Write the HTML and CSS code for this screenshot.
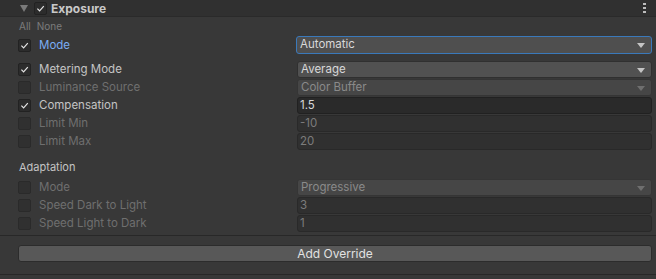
FILE: index.html
```html
<!DOCTYPE html>
<html>
	<head>
		<meta charset="UTF-8">
		<title>Exposure override</title>
		<link rel="stylesheet" href="styles.css">
	</head>
	<body>
		<div class="inspector">
			<div class="header">
				<span class="fold"></span>
				<span class="check on"><svg viewBox="0 0 12 12"><polyline points="2.6,6.2 5,8.6 9.6,3.4"/></svg></span>
				<span class="title">Exposure</span>
				<span class="kebab"><i></i><i></i><i></i></span>
			</div>
			<div class="allnone"><span>All</span><span>None</span></div>

			<div class="row first">
				<span class="check on"><svg viewBox="0 0 12 12"><polyline points="2.6,6.2 5,8.6 9.6,3.4"/></svg></span>
				<span class="label active">Mode</span>
				<div class="field popup focus">Automatic<span class="arrow"></span></div>
			</div>

			<div class="group">
				<div class="row">
					<span class="check on"><svg viewBox="0 0 12 12"><polyline points="2.6,6.2 5,8.6 9.6,3.4"/></svg></span>
					<span class="label">Metering Mode</span>
					<div class="field popup">Average<span class="arrow"></span></div>
				</div>
				<div class="row off">
					<span class="check"></span>
					<span class="label">Luminance Source</span>
					<div class="field popup">Color Buffer<span class="arrow"></span></div>
				</div>
				<div class="row">
					<span class="check on"><svg viewBox="0 0 12 12"><polyline points="2.6,6.2 5,8.6 9.6,3.4"/></svg></span>
					<span class="label">Compensation</span>
					<div class="field text">1.5</div>
				</div>
				<div class="row off">
					<span class="check"></span>
					<span class="label">Limit Min</span>
					<div class="field text">-10</div>
				</div>
				<div class="row off">
					<span class="check"></span>
					<span class="label">Limit Max</span>
					<div class="field text">20</div>
				</div>
			</div>

			<div class="section">Adaptation</div>

			<div class="group">
				<div class="row off">
					<span class="check"></span>
					<span class="label">Mode</span>
					<div class="field popup">Progressive<span class="arrow"></span></div>
				</div>
				<div class="row off">
					<span class="check"></span>
					<span class="label">Speed Dark to Light</span>
					<div class="field text">3</div>
				</div>
				<div class="row off">
					<span class="check"></span>
					<span class="label">Speed Light to Dark</span>
					<div class="field text">1</div>
				</div>
			</div>

			<div class="footer">
				<button class="add">Add Override</button>
			</div>
		</div>
	</body>
</html>
```
FILE: styles.css
```css
*{
	margin: 0;
	padding: 0;
	box-sizing: border-box;
}
body{
	width: 656px;
	height: 279px;
	overflow: hidden;
	background: #383838;
	font-family: Inter, "Noto Sans", sans-serif;
	font-size: 11.5px;
	color: #c4c4c4;
}
.header{
	display: flex;
	align-items: center;
	height: 17px;
	background: #303030;
	border-bottom: 1px solid #2a2a2a;
	padding-left: 20px;
	padding-right: 10px;
}
.fold{
	width: 0;
	height: 0;
	border-left: 4px solid transparent;
	border-right: 4px solid transparent;
	border-top: 7px solid #7a7a7a;
	margin-right: 6px;
}
.header .check{
	margin-right: 4px;
}
.title{
	font-weight: bold;
	font-size: 12px;
	color: #c8c8c8;
	flex: 1;
}
.kebab{
	display: flex;
	flex-direction: column;
	gap: 2px;
}
.kebab i{
	display: block;
	width: 3px;
	height: 2px;
	background: #bdbdbd;
}
.allnone{
	display: flex;
	gap: 6px;
	height: 18px;
	align-items: center;
	padding-left: 19px;
	font-size: 10px;
	color: #7c7c7c;
}
.check{
	display: flex;
	width: 13px;
	height: 13px;
	border-radius: 2px;
	background: #2c2c2c;
	border: 1px solid #222;
	flex: none;
}
.check svg{
	width: 11px;
	height: 11px;
	fill: none;
	stroke: #e4e4e4;
	stroke-width: 1.3;
}
.row{
	display: flex;
	align-items: center;
	height: 18px;
	padding-left: 18px;
	padding-right: 4px;
}
.row .check{
	margin-right: 8px;
}
.row.first{
	height: 18px;
	margin-top: 1px;
	margin-bottom: 6px;
}
.label{
	width: 258px;
	flex: none;
	color: #c4c4c4;
}
.label.active{
	color: #7badf5;
}
.field{
	position: relative;
	flex: 1;
	height: 17px;
	line-height: 15px;
	border-radius: 3px;
	padding-left: 3px;
	white-space: nowrap;
}
.popup{
	background: #515151;
	border: 1px solid #303030;
	color: #d8d8d8;
}
.popup.focus{
	height: 18px;
	border-color: #3a79bb;
	background: #4f4f4f;
	margin-left: -1px;
}
.text{
	background: #2a2a2a;
	border: 1px solid #212121;
	color: #d8d8d8;
	padding-left: 2px;
}
.arrow{
	position: absolute;
	right: 6px;
	top: 6px;
	width: 0;
	height: 0;
	border-left: 4px solid transparent;
	border-right: 4px solid transparent;
	border-top: 5px solid #c4c4c4;
}
.off .check{
	background: #303030;
	border-color: #2a2a2a;
}
.off .label{
	color: #6f6f6f;
}
.off .popup{
	background: #464646;
	border-color: #353535;
	color: #8a8a8a;
}
.off .arrow{
	border-top-color: #6f6f6f;
}
.off .text{
	background: #303030;
	border-color: #292929;
	color: #7c7c7c;
}
.section{
	height: 28px;
	line-height: 34px;
	padding-left: 19px;
	font-size: 11px;
	color: #c4c4c4;
}
.footer{
	margin-top: 3px;
	border-top: 1px solid #282828;
	border-bottom: 1px solid #282828;
	padding: 9px 4px 12px 18px;
}
.add{
	display: block;
	width: 100%;
	height: 17px;
	border: 1px solid #2c2c2c;
	border-radius: 3px;
	background: #585858;
	color: #e2e2e2;
	font-family: Inter, "Noto Sans", sans-serif;
	font-size: 12px;
}
```
